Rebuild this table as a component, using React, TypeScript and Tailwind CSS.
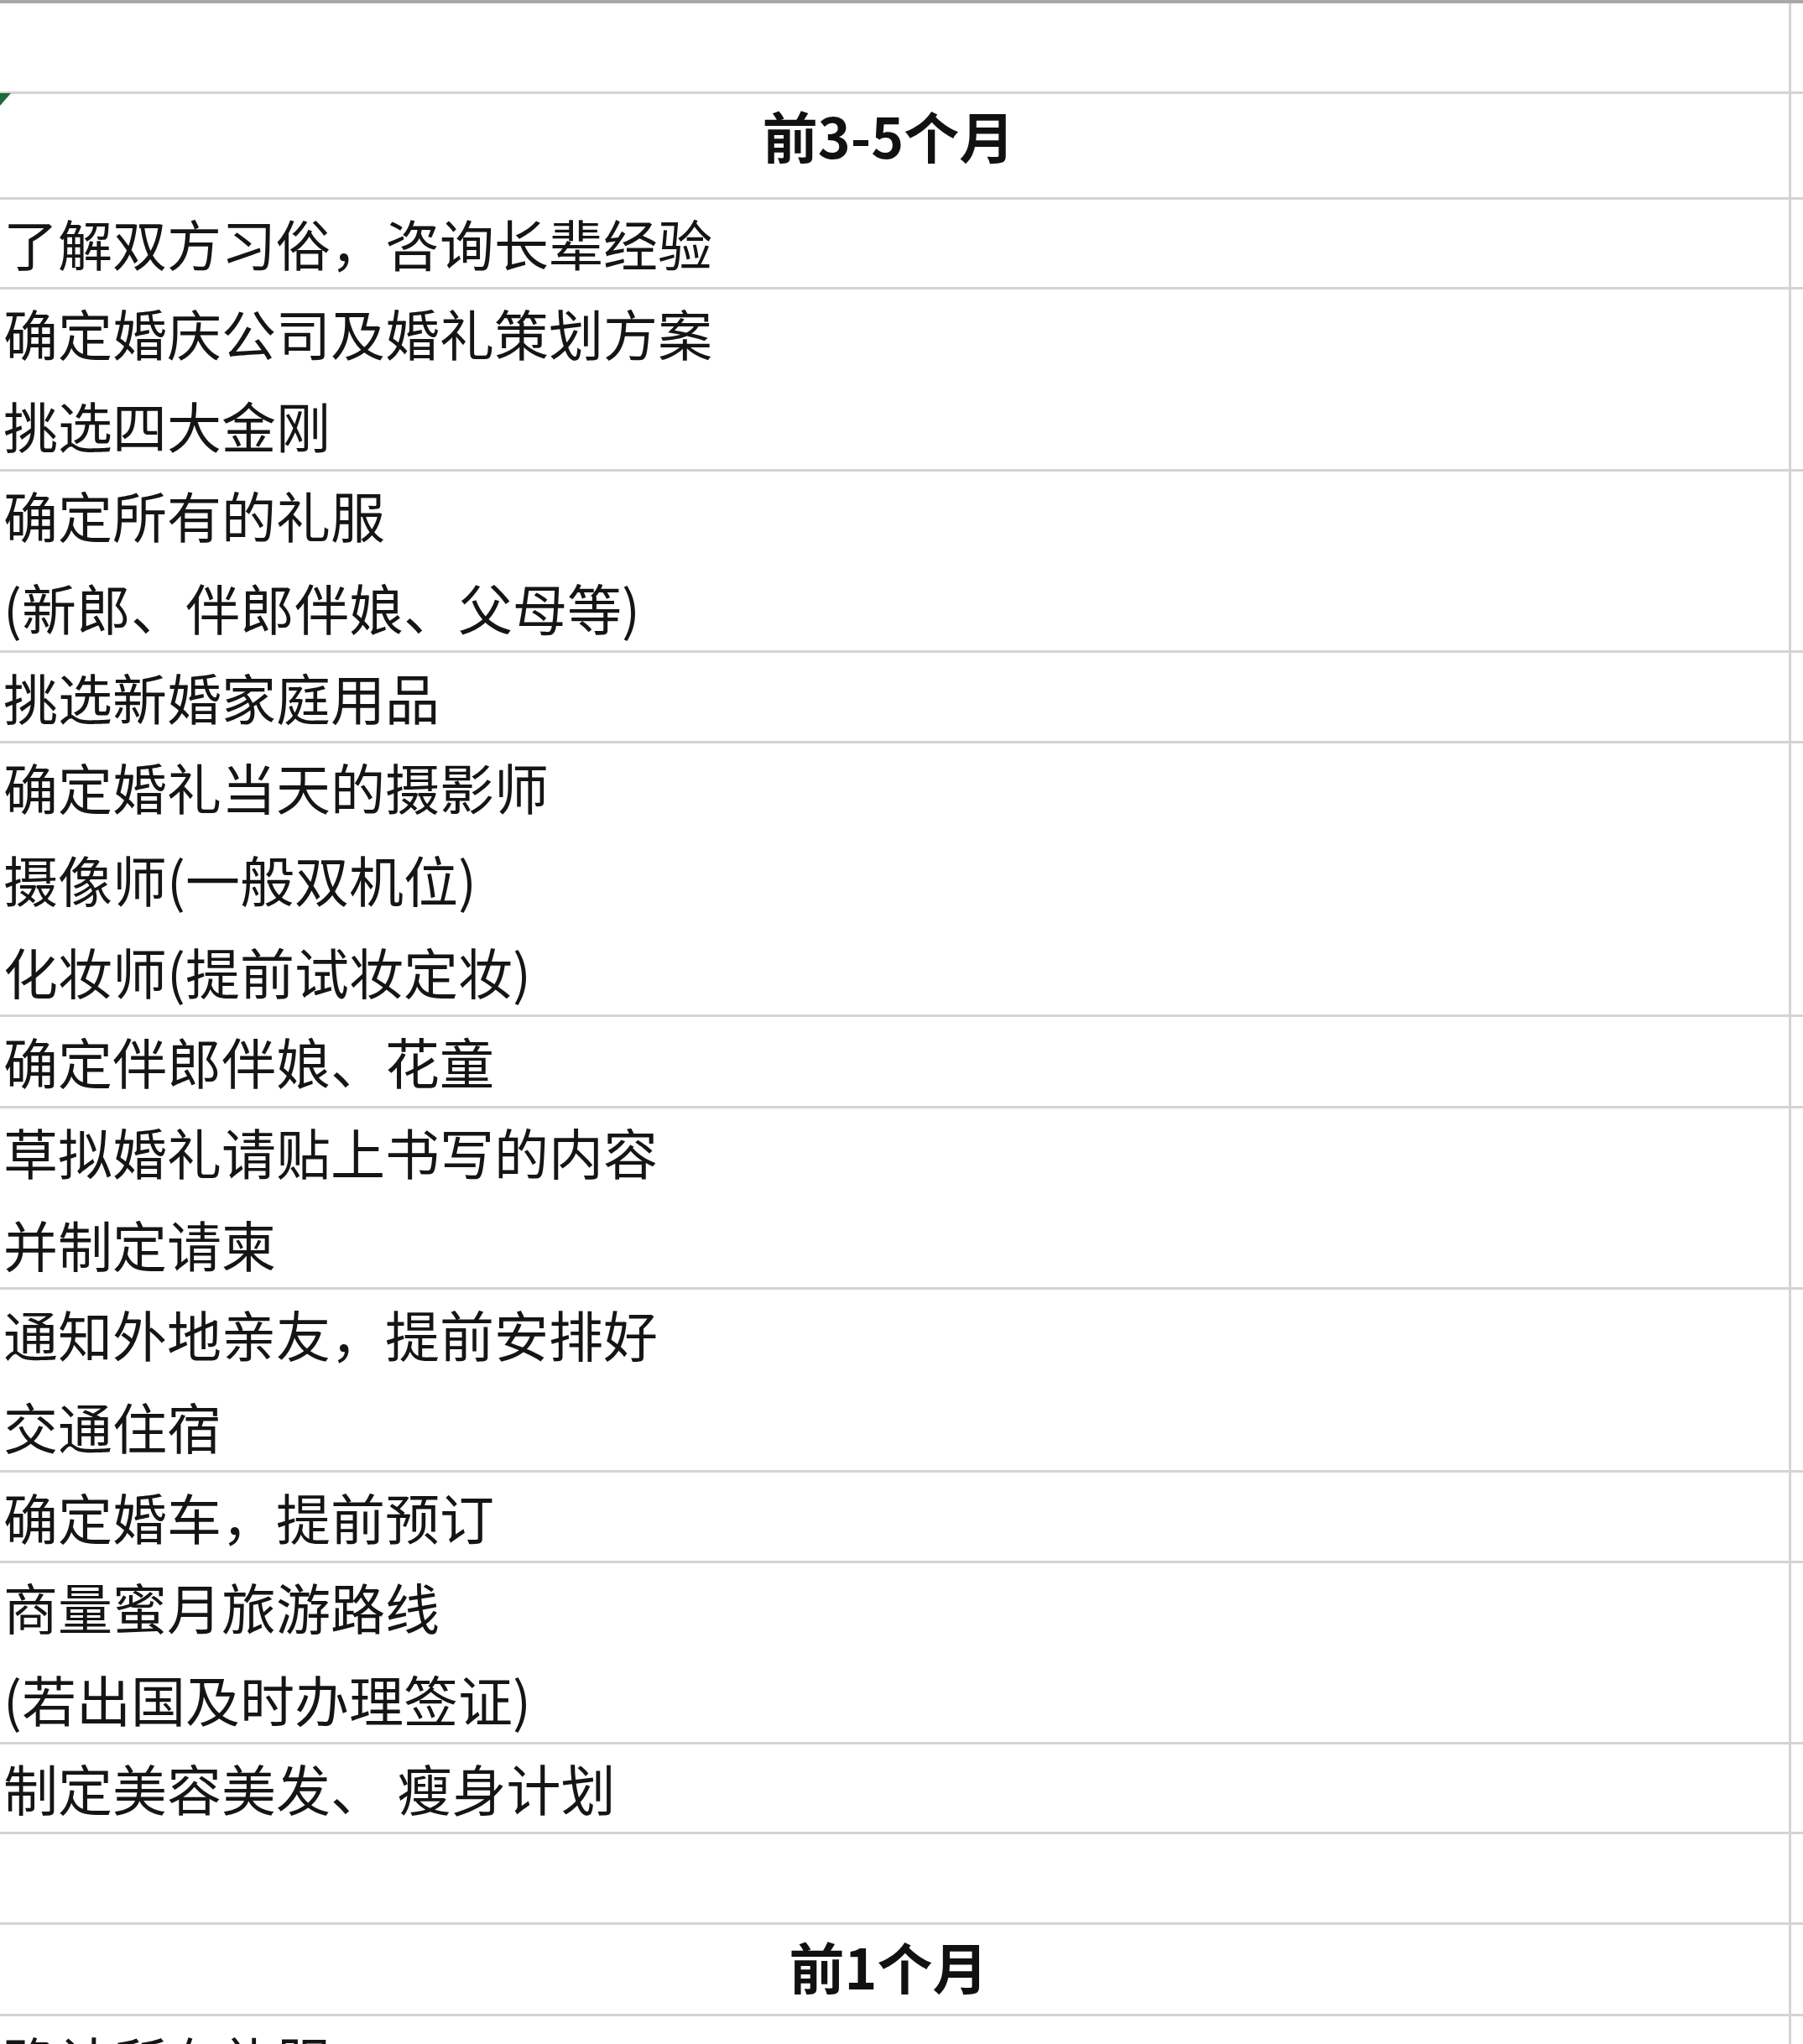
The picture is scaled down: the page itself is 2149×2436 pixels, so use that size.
type Row = {
  h: string;
  lines?: string[];
  header?: string;
  headerPad?: string;
};

const rows: Row[] = [
  { h: "h-[112px] border-t-[4px] border-t-[#a8a8a8]" },
  { h: "h-[126px]", header: "前3-5个月", headerPad: "pb-[27px]" },
  { h: "h-[107px]", lines: ["了解双方习俗，咨询长辈经验"] },
  { h: "h-[217px]", lines: ["确定婚庆公司及婚礼策划方案", "挑选四大金刚"] },
  { h: "h-[216px]", lines: ["确定所有的礼服", "(新郎、伴郎伴娘、父母等)"] },
  { h: "h-[108px]", lines: ["挑选新婚家庭用品"] },
  {
    h: "h-[326px]",
    lines: ["确定婚礼当天的摄影师", "摄像师(一般双机位)", "化妆师(提前试妆定妆)"],
  },
  { h: "h-[109px]", lines: ["确定伴郎伴娘、花童"] },
  { h: "h-[216px]", lines: ["草拟婚礼请贴上书写的内容", "并制定请柬"] },
  { h: "h-[218px]", lines: ["通知外地亲友，提前安排好", "交通住宿"] },
  { h: "h-[108px]", lines: ["确定婚车，提前预订"] },
  { h: "h-[216px]", lines: ["商量蜜月旅游路线", "(若出国及时办理签证)"] },
  { h: "h-[107px]", lines: ["制定美容美发、 瘦身计划"] },
  { h: "h-[108px]" },
  { h: "h-[109px]", header: "前1个月", headerPad: "pb-[10px]" },
  { h: "h-[108px]", lines: ["确认所有礼服"] },
];

function SheetRow({ row }: { row: Row }) {
  return (
    <div className={`flex shrink-0 border-b-[3px] border-b-[#d4d4d4] ${row.h}`}>
      <div className="flex w-[2135px] shrink-0 flex-col justify-center border-r-[3px] border-r-[#d4d4d4]">
        {row.header ? (
          <div
            className={`pr-[14px] text-center text-[66px] leading-[108px] font-bold text-[#111] ${row.headerPad ?? ""}`}
          >
            {row.header}
          </div>
        ) : null}
        {row.lines?.map((l) => (
          <div key={l} className="pb-[2px] pl-[4px] text-[65px] leading-[108px] whitespace-pre text-[#151515]">
            {l}
          </div>
        ))}
      </div>
      <div className="flex-1" />
    </div>
  );
}

export default function App() {
  return (
    <div className="relative flex h-[2436px] w-[2149px] flex-col overflow-hidden bg-white font-['Noto_Sans_CJK_SC','Noto_Sans',sans-serif]">
      {rows.map((r, i) => (
        <SheetRow key={i} row={r} />
      ))}

      {/* green error marker in the cell corner */}
      <svg className="absolute top-[111px] left-0" width="14" height="16" viewBox="0 0 14 16" aria-hidden>
        <polygon points="0,0 13,0 0,15" fill="#1f6a36" />
      </svg>
    </div>
  );
}
